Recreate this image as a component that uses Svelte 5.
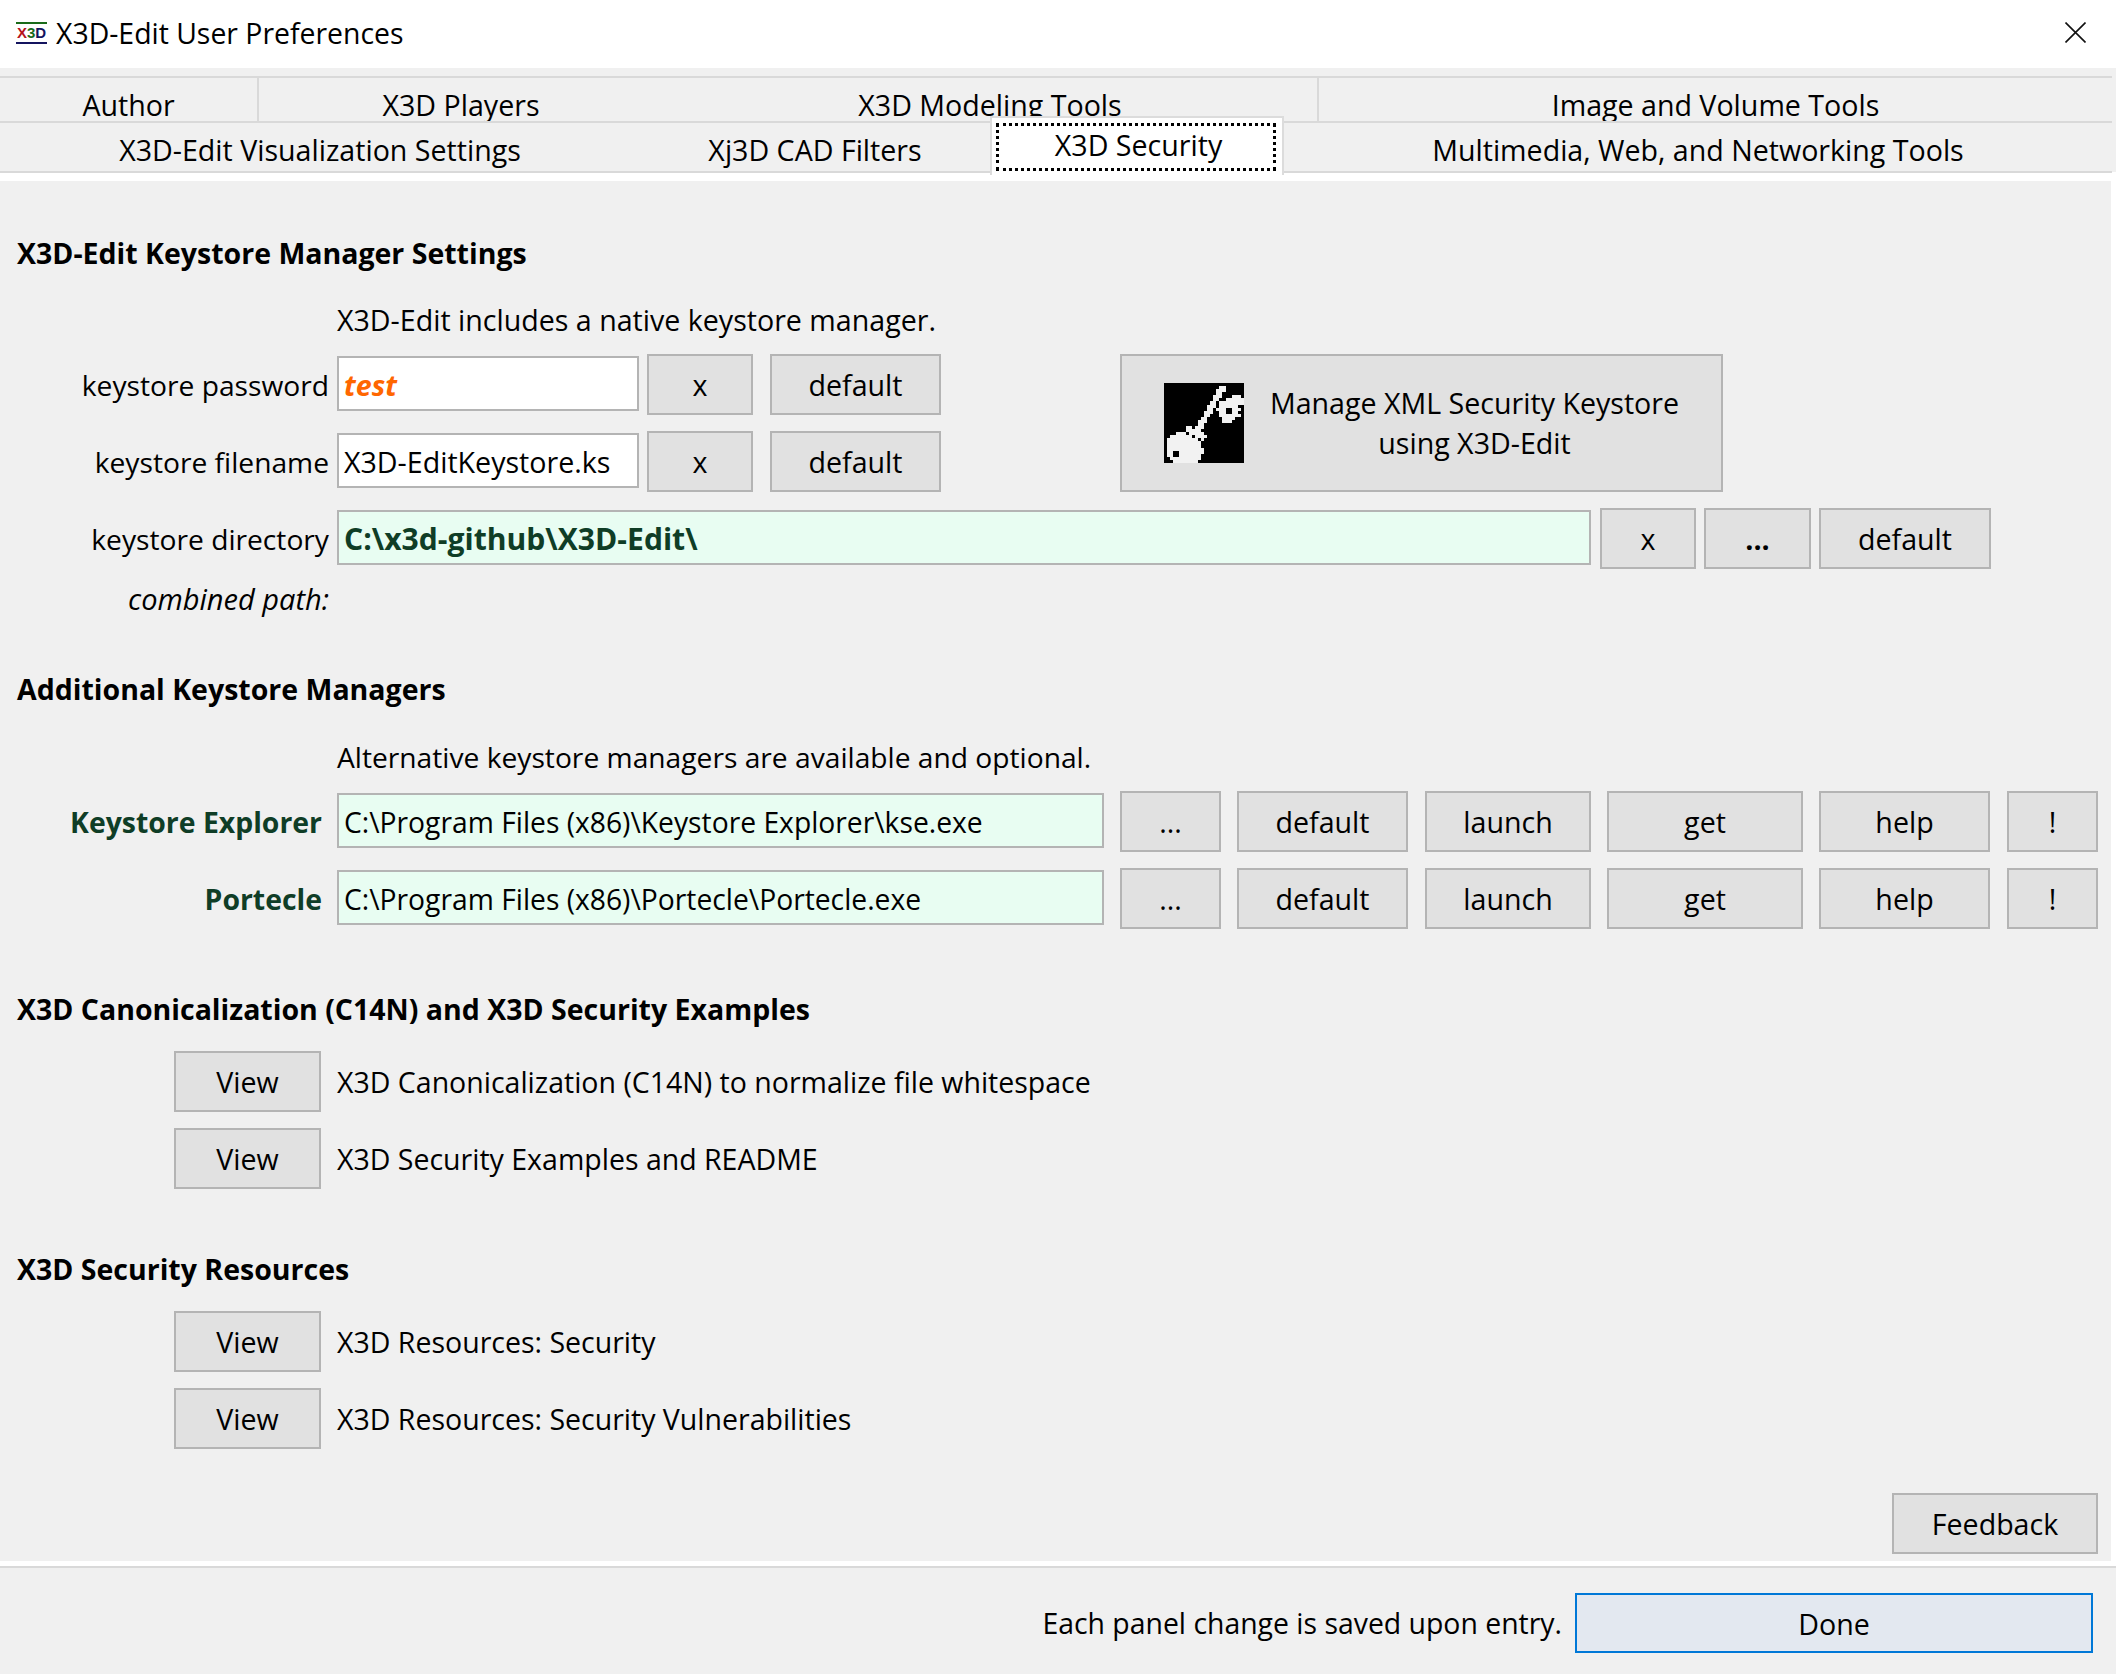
<script>
    const row1 = [
        { name: 'Author', cls: 't-author' },
        { name: 'X3D Players', cls: 't-players' },
        { name: 'X3D Modeling Tools', cls: 't-modeling' },
        { name: 'Image and Volume Tools', cls: 't-image' }
    ];
    const tools = [
        { name: 'Keystore Explorer', path: 'C:\\Program Files (x86)\\Keystore Explorer\\kse.exe' },
        { name: 'Portecle', path: 'C:\\Program Files (x86)\\Portecle\\Portecle.exe' }
    ];
    const c14n = [
        'X3D Canonicalization (C14N) to normalize file whitespace',
        'X3D Security Examples and README'
    ];
    const resources = ['X3D Resources: Security', 'X3D Resources: Security Vulnerabilities'];

    // key icon as [row, from col, to col], it is a low res bitmap in the original
    const keyPixels = [
        [1, 18, 19], [2, 17, 19], [3, 17, 18], [4, 16, 18], [4, 22, 24],
        [5, 16, 17], [5, 20, 25], [6, 15, 16], [6, 18, 25], [7, 14, 16], [7, 18, 23],
        [8, 14, 15], [8, 17, 19], [8, 22, 24], [9, 13, 15], [9, 18, 19], [9, 22, 23],
        [10, 13, 14], [10, 18, 24], [11, 12, 13], [11, 19, 22], [12, 11, 13], [12, 19, 21],
        [13, 11, 12], [14, 7, 8], [14, 10, 12], [15, 7, 11], [16, 4, 6], [16, 8, 12],
        [17, 2, 8], [17, 10, 13], [18, 1, 10], [18, 12, 12], [19, 1, 11], [20, 1, 11],
        [21, 1, 12], [22, 1, 2], [22, 5, 12], [23, 1, 2], [23, 5, 11], [24, 2, 11], [25, 3, 10]
    ];
</script>

<div class="window">
    <header class="titlebar">
        <div class="logo">
            <span class="x">X</span><span class="three">3</span><span class="d">D</span>
        </div>
        <span class="title">X3D-Edit User Preferences</span>
        <svg class="close" viewBox="0 0 21 21" width="21" height="21">
            <path d="M0.5 0.5L20.5 20.5M20.5 0.5L0.5 20.5" stroke="#111" stroke-width="1.6" fill="none" />
        </svg>
    </header>

    <nav class="tabs">
        <div class="tab-row first">
            {#each row1 as tab}
                <div class="tab {tab.cls}">{tab.name}</div>
            {/each}
        </div>
        <div class="tab-row second">
            <div class="tab t-vis">X3D-Edit Visualization Settings</div>
            <div class="tab t-cad">Xj3D CAD Filters</div>
            <div class="tab selected"><span class="focus">X3D Security</span></div>
            <div class="tab t-media">Multimedia, Web, and Networking Tools</div>
        </div>
    </nav>

    <main class="panel">
        <h2 class="h-first">X3D-Edit Keystore Manager Settings</h2>
        <p class="note n-first">X3D-Edit includes a native keystore manager.</p>

        <div class="keystore">
            <div class="keystore-fields">
                <div class="row">
                    <span class="label">keystore password</span>
                    <div class="input small test">test</div>
                    <button class="b-x">x</button>
                    <button class="b-default">default</button>
                </div>
                <div class="row">
                    <span class="label">keystore filename</span>
                    <div class="input small">X3D-EditKeystore.ks</div>
                    <button class="b-x">x</button>
                    <button class="b-default">default</button>
                </div>
            </div>
            <button class="manage">
                <svg class="key" viewBox="0 0 26 26" width="80" height="80" shape-rendering="crispEdges">
                    <rect width="26" height="26" fill="#000" />
                    {#each keyPixels as [r, a, b]}
                        <rect x={a} y={r} width={b - a + 1} height="1" fill="#f2f2f2" />
                    {/each}
                </svg>
                <span class="manage-text">Manage XML Security Keystore<br />using X3D-Edit</span>
            </button>
        </div>

        <div class="row r-dir">
            <span class="label">keystore directory</span>
            <div class="input wide green strong">C:\x3d-github\X3D-Edit\</div>
            <button class="b-xs">x</button>
            <button class="b-dots strong-dots">...</button>
            <button class="b-default last">default</button>
        </div>
        <div class="combined"><span class="label"><em>combined path:</em></span></div>

        <h2 class="h-additional">Additional Keystore Managers</h2>
        <p class="note n-alt">Alternative keystore managers are available and optional.</p>

        {#each tools as tool, i}
            <div class="row tool" class:next={i > 0}>
                <span class="label tool-name">{tool.name}</span>
                <div class="input path green">{tool.path}</div>
                <button class="b-more">...</button>
                <button class="b-default g16">default</button>
                <button class="b-launch">launch</button>
                <button class="b-get g16">get</button>
                <button class="b-default g16">help</button>
                <button class="b-bang">!</button>
            </div>
        {/each}

        <h2 class="h-c14n">X3D Canonicalization (C14N) and X3D Security Examples</h2>
        {#each c14n as text, i}
            <div class="row view-row" class:next={i > 0}>
                <button class="b-view">View</button>
                <span class="view-text">{text}</span>
            </div>
        {/each}

        <h2 class="h-res">X3D Security Resources</h2>
        {#each resources as text, i}
            <div class="row view-row" class:next={i > 0}>
                <button class="b-view">View</button>
                <span class="view-text">{text}</span>
            </div>
        {/each}

        <div class="feedback-row"><button class="b-feedback">Feedback</button></div>
    </main>

    <footer class="footer">
        <span class="saved">Each panel change is saved upon entry.</span>
        <button class="done">Done</button>
    </footer>
</div>

<style>
    :global(body) {
        background: #fff;
    }
    .window {
        width: 2116px;
        height: 1675px;
        font-family: "Open Sans", sans-serif;
        font-size: 28.6px;
        color: #000;
        background: #fff;
        overflow: hidden;
    }
    button {
        font: inherit;
        color: #000;
        background: #e1e1e1;
        border: 2px solid #b4b4b4;
        padding: 0;
        height: 61px;
        flex-shrink: 0;
    }

    .titlebar {
        height: 68px;
        box-sizing: border-box;
        display: flex;
        align-items: center;
        padding: 0 30px 3px 16px;
    }
    .logo {
        box-sizing: border-box;
        width: 31px;
        height: 22px;
        border-top: 2px solid #1a6b1a;
        border-bottom: 2px solid #14145f;
        font: bold 15px/18px "Liberation Sans", sans-serif;
        text-align: center;
        margin-right: 9px;
    }
    .x { color: #b5121b; }
    .three { color: #1a6b1a; }
    .d { color: #14145f; }
    .title {
        flex: 1;
        font-size: 28.4px;
    }
    .close {
        display: block;
    }

    .tabs {
        height: 113px;
        padding-top: 8px;
        box-sizing: border-box;
        background: linear-gradient(#f0f0f0 104px, #fff 104px);
    }
    .tab-row {
        display: flex;
        width: 2112px;
        border-top: 2px solid #d9d9d9;
    }
    .first {
        height: 43px;
        overflow: hidden;
    }
    .second {
        height: 48px;
        border-bottom: 2px solid #d9d9d9;
    }
    .tab {
        text-align: center;
        box-sizing: border-box;
    }
    .first .tab { padding-top: 7px; }
    .second .tab { padding-top: 7px; }
    .t-author { width: 259px; border-right: 2px solid #d9d9d9; }
    .t-players { width: 404px; }
    .t-modeling { width: 656px; border-right: 2px solid #d9d9d9; }
    .t-image { flex: 1; }
    .t-vis { width: 640px; }
    .t-cad { width: 350px; }
    .t-media { flex: 1; }
    .second .selected {
        position: relative;
        width: 294px;
        height: 59px;
        margin-top: -7px;
        padding: 5px 6px 4px 4px;
        background: #fff;
        border: 2px solid #dcdcdc;
        border-bottom: none;
    }
    .focus {
        display: block;
        height: 100%;
        box-sizing: border-box;
        border: 3px dotted #000;
        padding-left: 5px;
        line-height: 38px;
    }

    .panel {
        width: 2111px;
        height: 1380px;
        box-sizing: border-box;
        background: #f0f0f0;
        padding-top: 52px;
    }
    h2 {
        margin: 0 0 0 17px;
        height: 40px;
        font-size: 28.5px;
        line-height: 40px;
        font-weight: 700;
    }
    .note {
        margin: 0 0 0 337px;
        height: 40px;
        line-height: 40px;
    }
    .n-first { margin-top: 27px; margin-bottom: 14px; }
    .h-additional { margin-top: 50px; }
    .n-alt { margin-top: 28px; margin-bottom: 14px; font-size: 28.2px; }
    .h-c14n { margin-top: 60px; margin-bottom: 22px; }
    .h-res { margin-top: 60px; margin-bottom: 22px; }

    .row {
        display: flex;
        align-items: center;
        height: 61px;
    }
    .next { margin-top: 16px; }
    .row button { margin-left: 17px; }
    .row button.g16 { margin-left: 16px; }
    .label {
        width: 329px;
        margin-right: 8px;
        text-align: right;
        flex-shrink: 0;
        font-size: 28.2px;
    }
    .input {
        box-sizing: border-box;
        height: 55px;
        line-height: 54px;
        margin-bottom: 2px;
        padding-left: 5px;
        border: 2px solid #b4b4b4;
        background: #fff;
        white-space: nowrap;
    }
    .small { width: 302px; }
    .wide { width: 1254px; }
    .path { width: 767px; font-size: 28.25px; }
    .green { background: #e8fdf2; }
    .strong { font-weight: 700; font-size: 30.1px; color: #0f3d26; }
    .test { font-weight: 700; font-style: italic; color: #ff6600; }
    .row .b-x { width: 106px; margin-left: 8px; }
    .b-default { width: 171px; }
    .row .b-xs { width: 96px; margin-left: 9px; }
    .row .b-dots { width: 107px; margin-left: 8px; }
    .row .last { width: 172px; margin-left: 8px; }
    .strong-dots { font-weight: 700; }
    .b-more { width: 101px; }
    .row.tool .b-more { margin-left: 16px; }
    .b-launch { width: 166px; }
    .b-get { width: 196px; }
    .b-bang { width: 91px; }

    .keystore {
        display: flex;
    }
    .keystore-fields {
        display: flex;
        flex-direction: column;
        gap: 16px;
    }
    .manage {
        width: 603px;
        height: 138px;
        margin-left: 179px;
        display: flex;
        align-items: center;
        padding-left: 42px;
    }
    .key {
        flex-shrink: 0;
    }
    .manage-text {
        flex: 1;
        text-align: center;
        line-height: 40px;
        padding-right: 16px;
    }
    .r-dir { margin-top: 16px; }
    .combined {
        height: 40px;
        line-height: 40px;
        margin-top: 10px;
    }
    .combined .label {
        display: block;
        font-size: 29px;
    }

    .tool-name {
        width: 322px;
        margin-right: 15px;
        font-weight: 700;
        font-size: 28.4px;
        color: #0f3d26;
    }
    .view-row .b-view {
        width: 147px;
        margin-left: 174px;
    }
    .view-text {
        margin-left: 16px;
        font-size: 28.5px;
    }

    .feedback-row {
        display: flex;
        justify-content: flex-end;
        margin-top: 44px;
        padding-right: 13px;
    }
    .b-feedback {
        width: 206px;
    }

    .footer {
        margin-top: 5px;
        height: 108px;
        box-sizing: border-box;
        border-top: 2px solid #d9d9d9;
        background: #f0f0f0;
        display: flex;
        align-items: flex-start;
        justify-content: flex-end;
        padding: 25px 23px 0 0;
    }
    .saved {
        line-height: 60px;
        margin-right: 13px;
        font-size: 28.4px;
    }
    .done {
        width: 518px;
        height: 60px;
        background: #e3e8f0;
        border: 2px solid #0078d7;
    }
</style>
